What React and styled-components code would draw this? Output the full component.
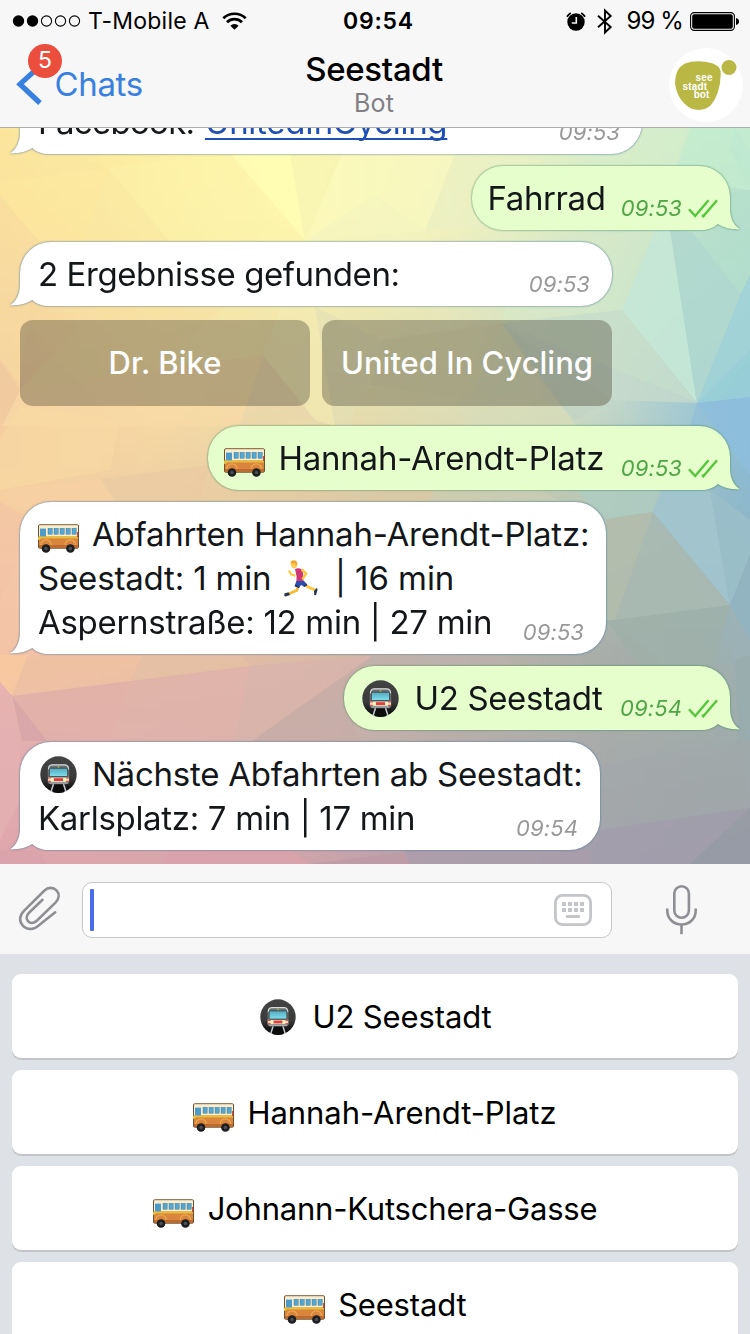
import React from "react";
import styled, { createGlobalStyle } from "styled-components";

const Global = createGlobalStyle`
  * { box-sizing: border-box; }
  body { margin: 0; font-family: Inter, "Liberation Sans", sans-serif; font-feature-settings: "calt" 0; }
`;

const Screen = styled.div`
  width: 750px;
  height: 1334px;
  overflow: hidden;
  display: flex;
  flex-direction: column;
  background: #f7f7f7;
`;

const Header = styled.header`
  height: 128px;
  flex: none;
  background: #f7f7f7;
  border-bottom: 1px solid #adada9;
`;

const StatusBar = styled.div`
  height: 40px;
  padding: 0 11px 0 12px;
  display: grid;
  grid-template-columns: 331px auto 1fr;
  align-items: center;
  line-height: 42px;
  color: #000;
`;

const StatusGroup = styled.div`
  display: flex;
  align-items: center;
  height: 40px;
  justify-content: ${(p) => (p.$end ? "flex-end" : "flex-start")};
`;

const Carrier = styled.span`
  font-size: 23px;
  letter-spacing: 0.24px;
  margin: 0 12px 0 7px;
`;

const Clock = styled.span`
  font-size: 23px;
  font-weight: 600;
  letter-spacing: 0.75px;
`;

const Percent = styled.span`
  font-size: 24px;
  letter-spacing: -0.9px;
  margin: 0 7px 0 14px;
`;

const NavBar = styled.div`
  height: 87px;
  display: grid;
  grid-template-columns: 249px 1fr 251px;
`;

const Back = styled.div`
  position: relative;
  display: flex;
  align-items: flex-start;
  padding: 24px 0 0 16px;
  color: #3880e0;
`;

const BackLabel = styled.span`
  font-size: 33px;
  line-height: 40px;
  letter-spacing: -0.35px;
  margin-left: 11.5px;
`;

const Badge = styled.span`
  position: absolute;
  left: 28px;
  top: 4px;
  width: 34px;
  height: 34px;
  border-radius: 17px;
  background: #eb4e3d;
  color: #fff;
  font-size: 23px;
  line-height: 33px;
  text-align: center;
`;

const Heading = styled.div`
  padding-top: 9px;
  text-align: center;
`;

const Title = styled.div`
  font-size: 33px;
  font-weight: 500;
  line-height: 40px;
  letter-spacing: -0.3px;
  color: #000;
`;

const Subtitle = styled.div`
  font-size: 25px;
  line-height: 28px;
  letter-spacing: 0.2px;
  color: #808084;
`;

const AvatarSlot = styled.div`
  display: flex;
  justify-content: flex-end;
  padding: 8px 7px 0 0;
`;

const Chat = styled.main`
  position: relative;
  height: 736px;
  flex: none;
  overflow: hidden;
  display: flex;
  flex-direction: column;
  justify-content: flex-end;
  gap: 12px;
  padding: 0 20px 14px;
`;

const WallpaperSvg = styled.svg`
  position: absolute;
  inset: 0;
`;

const Bubble = styled.div`
  position: relative;
  flex: none;
  width: ${(p) => p.$w}px;
  align-self: ${(p) => (p.$out ? "flex-end" : "flex-start")};
  padding: 10px ${(p) => (p.$out ? 12 : 22)}px 10px ${(p) => p.$pad ?? 18}px;
  border-radius: 31px;
  background: ${(p) => (p.$out ? "#e5fecb" : "#fff")};
  filter: drop-shadow(0 0 0.9px ${(p) => (p.$out ? "rgba(60,130,90,.95)" : "rgba(60,110,150,.95)")});
`;

const Tail = styled.svg`
  position: absolute;
  bottom: 0;
  ${(p) => (p.$out ? "right: -10px; transform: scaleX(-1);" : "left: -10px;")}
`;

const Line = styled.div`
  position: relative;
  display: flex;
  align-items: flex-start;
  height: 44px;
  font-size: 33px;
  line-height: 44px;
  color: #14171a;
  white-space: pre;
`;

const Words = styled.span`
  letter-spacing: ${(p) => p.$ls ?? -0.28}px;
  margin-left: ${(p) => p.$ml ?? 0}px;
`;

const Link = styled.a`
  color: #1d4fb4;
  letter-spacing: -0.3px;
  margin-left: 10.5px;
  text-decoration: underline;
  text-decoration-thickness: 2px;
  text-underline-offset: 4px;
  text-decoration-skip-ink: none;
`;

const Meta = styled.span`
  display: flex;
  align-items: flex-start;
  gap: 6px;
  margin: 10px 0 0 auto;
  font-size: 22px;
  font-style: italic;
  letter-spacing: 0.1px;
  color: ${(p) => (p.$out ? "#51a548" : "#999")};
`;

const Choices = styled.div`
  position: relative;
  flex: none;
  display: flex;
  gap: 12px;
  margin: 2px 0 8px;
`;

const Choice = styled.button`
  width: 290px;
  height: 86px;
  padding: 0;
  border: 0;
  border-radius: 13px;
  background: rgba(73, 67, 52, 0.37);
  color: #fff;
  font: 500 31px/86px Inter, "Liberation Sans", sans-serif;
  letter-spacing: 0;
`;

const Glyph = styled.svg`
  flex: none;
  display: block;
  margin-top: ${(p) => p.$top ?? 0}px;
  margin-left: ${(p) => p.$left ?? 0}px;
`;

const Composer = styled.div`
  height: 90px;
  flex: none;
  display: flex;
  align-items: flex-start;
  padding: 18px 0 0 17px;
  background: #f7f7f7;
`;

const Field = styled.div`
  width: 530px;
  height: 56px;
  margin: 0 52px 0 20px;
  display: flex;
  align-items: center;
  justify-content: space-between;
  padding: 0 19px 0 7px;
  border: 1px solid #c6c7ca;
  border-radius: 10px;
  background: #fff;
`;

const Caret = styled.span`
  width: 4px;
  height: 42px;
  border-radius: 1px;
  background: #496cea;
`;

const Keyboard = styled.div`
  flex: 1 0 380px;
  display: flex;
  flex-direction: column;
  gap: 12px;
  padding: 20px 12px 0;
  background: #dee2e7;
`;

const Key = styled.button`
  flex: none;
  height: 84px;
  padding: 0;
  border: 0;
  border-radius: 9px;
  background: #fff;
  box-shadow: 0 2px 0 #c3c5c8;
  display: flex;
  justify-content: center;
  align-items: flex-start;
  font: 400 31px/86px Inter, "Liberation Sans", sans-serif;
  color: #000;
`;

/* Colour samples of the wallpaper, one row per height. */
const SAMPLE_X = [0, 150, 300, 450, 600, 750];
const SAMPLE_Y = [128, 215, 300, 400, 495, 580, 660, 740, 864];
const SAMPLES = [
  ["fbe49c", "fdf0a2", "fffbb0", "f4f4be", "d8efca", "bfe8d0"],
  ["fbe09c", "fbeba2", "fff9b0", "f1f2c0", "d6e8c8", "b4dfcc"],
  ["f7d69e", "f9e4a4", "f3ebb0", "e6e8bc", "cbe4cc", "9fd2d2"],
  ["f4cca0", "f8dba4", "ecdfac", "dfe0b6", "c8dac8", "88bedb"],
  ["f6cfa0", "efcfa2", "e2cba4", "d2c8a8", "b6c8b8", "8cb8ce"],
  ["f4c6a8", "eec4a4", "dcc0a4", "c4beac", "aebbb0", "94b3be"],
  ["f5c3a6", "edbfa4", "dcbaa6", "bdb3aa", "a8aca8", "9bb0b2"],
  ["e4aeb0", "deb2ac", "ceb0aa", "b8aeaa", "a9acaa", "9aacac"],
  ["dfa6ac", "d9a5ac", "cfa3aa", "b2a0ac", "a29eab", "9598a2"],
];

const hex = (s) => [0, 2, 4].map((i) => parseInt(s.slice(i, i + 2), 16));

function colourAt(x, y) {
  const span = (list, v) => {
    let i = 0;
    while (i < list.length - 2 && v > list[i + 1]) i += 1;
    return [i, Math.min(1, Math.max(0, (v - list[i]) / (list[i + 1] - list[i])))];
  };
  const [i, u] = span(SAMPLE_X, x);
  const [j, v] = span(SAMPLE_Y, y);
  const c = [SAMPLES[j][i], SAMPLES[j][i + 1], SAMPLES[j + 1][i], SAMPLES[j + 1][i + 1]].map(hex);
  const mix = [0, 1, 2].map((k) =>
    Math.round((c[0][k] * (1 - u) + c[1][k] * u) * (1 - v) + (c[2][k] * (1 - u) + c[3][k] * u) * v)
  );
  return `rgb(${mix.join(",")})`;
}

/* Low-poly facets over the colour field. */
const FACETS = [
  ["0,128 108,168 0,182", "#fbe7a0", 0.45],
  ["80,155 205,152 240,128 0,128", "#fcefa4", 0.3],
  ["108,168 0,182 0,195 38,240 82,242", "#feea9e", 0.55],
  ["108,168 170,242 82,242", "#faeca4", 0.4],
  ["0,195 38,242 20,385 0,358", "#f8dca2", 0.5],
  ["108,168 230,153 305,241 170,242", "#fdf5aa", 0.45],
  ["230,153 290,153 305,240", "#fffeb6", 0.7],
  ["290,153 342,154 305,241", "#f7f3b4", 0.7],
  ["342,154 455,154 425,231 305,241", "#faf9c2", 0.5],
  ["305,241 375,195 425,231 430,242", "#f3f4c2", 0.5],
  ["455,154 540,160 480,225 425,231", "#eaf0c4", 0.6],
  ["600,128 690,128 672,180 600,165", "#daefca", 0.6],
  ["690,128 750,128 750,190 672,180", "#c5ecce", 0.7],
  ["735,128 750,150 750,190 730,150", "#bde8d0", 0.6],
  ["730,192 750,190 750,275 741,294 690,240 735,236", "#b5dfcc", 0.8],
  ["520,242 655,230 622,310 502,323", "#d7e9c8", 0.6],
  ["655,230 670,230 697,403 622,310", "#c6e8d6", 0.9],
  ["670,230 692,232 741,294 697,403", "#b1d8ce", 0.9],
  ["741,294 750,275 750,360 697,403", "#a2d3d6", 0.9],
  ["697,403 750,350 750,398", "#98ced6", 0.9],
  ["697,403 750,397 750,475", "#8dbedb", 0.9],
  ["697,403 750,475 712,426 690,426", "#93bfd6", 0.9],
  ["502,323 622,310 697,403", "#c9dfca", 0.8],
  ["502,323 697,403 612,400", "#c7dacc", 0.8],
  ["502,323 612,400 576,420 545,390", "#c3d3c4", 0.8],
  ["382,340 502,323 470,400 370,385", "#dddcb0", 0.6],
  ["502,323 460,426 576,426", "#d9ddb8", 0.7],
  ["100,307 225,307 140,372 20,390", "#f6e0a2", 0.5],
  ["225,307 280,307 263,355 150,370", "#f6e6aa", 0.5],
  ["20,390 263,355 240,426 0,426", "#f8daa6", 0.6],
  ["263,355 315,420 240,426", "#ead6ac", 0.6],
  ["263,355 280,307 315,307 335,426 315,420", "#f2eab2", 0.7],
  ["315,307 382,340 350,426 335,426", "#e3e0b6", 0.6],
  ["0,360 20,390 0,430", "#f0c9a0", 0.8],
  ["0,440 20,406 120,420 110,470 0,490", "#f9dba4", 0.6],
  ["100,479 210,465 200,501 115,501", "#ebcba2", 0.85],
  ["0,490 100,479 115,501 22,510", "#f6d0a2", 0.7],
  ["0,502 22,515 20,560 0,600", "#f3c2a6", 0.5],
  ["375,490 433,490 430,501 365,501", "#dbc9a4", 0.7],
  ["433,490 540,490 560,501 430,501", "#ccceb4", 0.6],
  ["576,490 662,490 653,512 606,519", "#afcbc0", 0.9],
  ["606,519 653,512 615,620 606,620", "#b3bcad", 0.9],
  ["653,512 730,605 615,621", "#a9b9b1", 0.9],
  ["662,488 710,490 730,605 653,512", "#a1c4cd", 0.95],
  ["710,490 750,520 750,555 730,605", "#9abfc9", 0.9],
  ["730,605 750,555 750,640", "#91b4c1", 0.9],
  ["606,621 730,605 715,665 640,665", "#9fb0a9", 0.8],
  ["730,605 750,640 750,740 735,690", "#9cb2b5", 0.8],
  ["0,655 28,655 12,696 0,682", "#f9cb9f", 0.8],
  ["28,655 142,655 130,681 12,696", "#efc1a2", 0.85],
  ["142,655 240,655 250,666 130,681", "#e4c0a4", 0.9],
  ["12,696 130,681 110,741 47,741", "#e1b0a9", 0.85],
  ["130,681 250,666 235,741 110,741", "#dfb3aa", 0.85],
  ["12,696 47,741 22,741", "#d6a4a8", 0.8],
  ["0,682 12,696 20,742 20,800 0,840", "#e5b0b2", 0.8],
  ["250,666 372,656 252,741 235,741", "#d8b4ac", 0.85],
  ["372,656 344,700 360,741 252,741", "#c7aca8", 0.8],
  ["372,656 500,656 515,665 365,665", "#bcb0ac", 0.7],
  ["606,665 735,665 740,740 600,765", "#a4ada9", 0.4],
  ["735,660 750,655 750,800 738,740", "#98aaac", 0.6],
  ["600,765 750,740 750,808 600,830", "#a2a8a9", 0.7],
  ["600,830 750,808 690,864 590,864", "#a29eac", 0.8],
  ["750,808 750,864 690,864", "#979ba5", 0.9],
  ["0,850 40,850 45,864 0,864", "#d8a2aa", 0.6],
  ["170,850 290,850 310,864 160,864", "#dba2ab", 0.7],
  ["310,864 404,852 410,864", "#bd9ba6", 0.8],
  ["404,850 590,850 590,864 410,864", "#aa9cab", 0.7],
];

function Wallpaper() {
  const cells = [];
  for (let y = 88; y < 904; y += 20) {
    for (let x = -40; x < 800; x += 20) cells.push([x, y]);
  }
  return (
    <WallpaperSvg width="750" height="736" viewBox="0 128 750 736">
      <defs>
        <filter id="soft" x="0" y="0" width="1" height="1" colorInterpolationFilters="sRGB">
          <feGaussianBlur stdDeviation="10" />
        </filter>
      </defs>
      <g filter="url(#soft)">
        {cells.map(([x, y]) => (
          <rect key={`${x}-${y}`} x={x} y={y} width="21" height="21" fill={colourAt(x + 10, y + 10)} />
        ))}
      </g>
      {FACETS.map(([points, fill, opacity]) => (
        <polygon key={points} points={points} fill={fill} opacity={opacity} />
      ))}
    </WallpaperSvg>
  );
}

function Bus({ top = 12, left = 0, width = 41 }) {
  return (
    <Glyph $top={top} $left={left} width={width} height="29" viewBox="0 0 41 29" preserveAspectRatio="none">
      <rect x="0.5" y="0.8" width="40" height="23.4" rx="1.2" fill="#d9853d" stroke="#6f5132" />
      <path d="M1 2q0-.8.8-.8h37.400q.8 0 .8.8v10.500H1z" fill="#f6efd3" />
      <path d="M1 12.200h39v2.400H1z" fill="#e9bb3c" />
      <path d="M1 21h39v2.800H1z" fill="#bd6c2f" />
      <rect x="2" y="4.600" width="6" height="7.800" fill="#4c9bc8" />
      {[10, 16, 22, 28, 34].map((x) => (
        <rect key={x} x={x} y="4.300" width="4.200" height="6" fill="#55a5cf" stroke="#39708f" strokeWidth="0.4" />
      ))}
      <rect x="39.200" y="8" width="1.600" height="5" fill="#a93428" />
      <rect x="0" y="12.500" width="2.400" height="3.600" rx="1" fill="#e7c640" />
      <path d="M2.800 21a5.200 5.200 0 0 1 10.400 0M27.200 21a5.200 5.200 0 0 1 10.400 0" fill="none" stroke="#eba850" strokeWidth="1.300" />
      {[8, 32.4].map((x) => (
        <g key={x}>
          <circle cx={x} cy="24.500" r="4.300" fill="#1d1e20" />
          <circle cx={x} cy="24.500" r="1.700" fill="#4b5158" />
        </g>
      ))}
    </Glyph>
  );
}

function Metro({ top = 4, left = 0, size = 37 }) {
  return (
    <Glyph $top={top} $left={left} width={size} height={size} viewBox="0 0 37 37">
      <defs>
        <linearGradient id="tunnel" x1="0" y1="0" x2="0" y2="1">
          <stop offset="0" stopColor="#434343" />
          <stop offset="0.600" stopColor="#3a3a3a" />
          <stop offset="1" stopColor="#000" />
        </linearGradient>
        <linearGradient id="windshield" x1="0" y1="0" x2="0" y2="1">
          <stop offset="0" stopColor="#55aabd" />
          <stop offset="1" stopColor="#7ee0ee" />
        </linearGradient>
      </defs>
      <circle cx="18.500" cy="18.500" r="18.200" fill="url(#tunnel)" />
      <path d="M13.500 28 11 35.800M23.500 28l2.500 7.800" stroke="#c8ccd2" strokeWidth="1.500" />
      <path d="M14.500 28h8l1.600 8.300q-5.600 1.200-11.200 0z" fill="#0c0c0c" />
      <path d="M11 8.500h15q3 .5 3.200 4L29.300 26q-.5 2.300-2.800 2.300h-16q-2.300 0-2.800-2.300l.1-13.500q.2-3.500 3.200-4z" fill="#6b7073" />
      <path d="M8.500 13.500q0-4.500 3.500-4.700h13q3.500.2 3.500 4.700" fill="none" stroke="#d8dadb" strokeWidth="1.200" />
      <rect x="9.400" y="12.200" width="18.200" height="8.400" rx="0.800" fill="url(#windshield)" stroke="#343a3c" strokeWidth="0.800" />
      <rect x="8" y="21.500" width="21" height="4.400" fill="#e8dcc8" />
      <rect x="14" y="22.200" width="9" height="2.800" fill="#e43c38" />
      <path d="M8 21.900h3M26 21.900h3M8 25.300h3M26 25.300h3" stroke="#e4524c" strokeWidth="1.200" />
      <circle cx="12" cy="23.700" r="1.700" fill="#fff5a8" />
      <circle cx="25" cy="23.700" r="1.700" fill="#fff5a8" />
      <path d="M9.500 27h18" stroke="#b5b8bb" strokeWidth="1.200" />
      <rect x="17.800" y="10" width="1.500" height="1.500" fill="#b6bd35" />
    </Glyph>
  );
}

function Runner() {
  return (
    <Glyph $top={4} $left={13} width="34" height="37" viewBox="0 0 34 37">
      <path d="M10.500 15.500 7 14.200 5.400 11.300" fill="none" stroke="#ffc83a" strokeWidth="2.200" strokeLinecap="round" strokeLinejoin="round" />
      <path d="M14.500 25 13 30.300 5 33.800" fill="none" stroke="#f7b930" strokeWidth="2.600" strokeLinejoin="round" />
      <path d="M20 24 23.500 26.600 31 30" fill="none" stroke="#ffc83a" strokeWidth="2.800" strokeLinejoin="round" />
      <path d="M12.500 20.800h7.300l3.500 3.600-3 2.400-3.300-1.800-2 2.900-4.400-1.800z" fill="#2e4cab" />
      <path d="M11 25.700l4 1.800M20 26.500l3-2" stroke="#1b2a6c" strokeWidth="1.300" />
      <path d="M11 9q3.500-1.500 6.500.2l1.600 4.100.3 7.700h-7l.2-4.500z" fill="#cf3673" />
      <path d="M18.300 10 22.200 13.600 18.800 18.600" fill="none" stroke="#ffc83a" strokeWidth="2.400" strokeLinecap="round" strokeLinejoin="round" />
      <path d="M6.800 3.500q0-2.500 3-2.500 3.300 0 3.300 3.300 0 3.700-2.600 4.300-3-.2-3.700-3z" fill="#ffcb50" />
      <path d="M6.400 2.800Q6.700.3 9.700.3q4 .2 3.600 4.300L12 6l-.7-2.600Q8.800 3.800 6.400 2.800z" fill="#efa92a" />
      <path d="M.3 33.600 4.500 32.200l1.600 2.900-4.600 1.500q-1.500-.2-1.200-3z" fill="#2a3350" />
      <path d="M30 31l2-2.600q1.700-.3 1.500 1.300L32 35.300l-1.800-.2z" fill="#2a3350" />
    </Glyph>
  );
}

const Checks = () => (
  <Glyph $top={13} width="30" height="20" viewBox="0 0 30 20">
    <path d="M1 10.200 7.200 17 20.500 1.300M14 16l1.300 1.200L29 1.300" fill="none" stroke="#56c63c" strokeWidth="2.400" />
  </Glyph>
);

function BubbleTail({ out }) {
  return (
    <Tail $out={out} width="40" height="34" viewBox="0 0 40 34">
      <path d="M10 0v12C10 21 7 29 0 33.200 9 33.600 16 32 22.300 28 27 32 32 34 40 34V0z" fill={out ? "#e5fecb" : "#fff"} />
    </Tail>
  );
}

const Incoming = ({ w, children }) => (
  <Bubble $w={w}>
    <BubbleTail />
    {children}
  </Bubble>
);

const Outgoing = ({ w, pad, time, children }) => (
  <Bubble $w={w} $pad={pad} $out>
    <BubbleTail out />
    <Line>
      {children}
      <Meta $out>
        {time}
        <Checks />
      </Meta>
    </Line>
  </Bubble>
);

const SignalDots = () => (
  <Glyph width="69" height="14" viewBox="0 0 69 14">
    {[0, 1, 2, 3, 4].map((i) => (
      <circle key={i} cx={6.5 + i * 14} cy="7" r={i < 2 ? 5.7 : 5.1} fill={i < 2 ? "#000" : "none"} stroke={i < 2 ? "none" : "#000"} strokeWidth="1.100" />
    ))}
  </Glyph>
);

const Wifi = () => (
  <Glyph width="25" height="18" viewBox="0 0 25 18">
    <path d="M1.300 6.300a16 16 0 0 1 22.400 0M5 10.200a10.700 10.700 0 0 1 15 0" fill="none" stroke="#000" strokeWidth="2.700" />
    <path d="M12.500 17.800 8.400 13.700a5.800 5.800 0 0 1 8.200 0z" />
  </Glyph>
);

const Alarm = () => (
  <Glyph width="20" height="19" viewBox="0 0 20 19">
    <circle cx="10" cy="10" r="8.700" />
    <path d="M1 4.700A11 11 0 0 1 4.800 1M15.200 1A11 11 0 0 1 19 4.700" fill="none" stroke="#000" strokeWidth="1.800" />
    <path d="M10.300 5v6H5.800" fill="none" stroke="#f7f7f7" strokeWidth="1.600" />
  </Glyph>
);

const Bluetooth = () => (
  <Glyph $left={11} width="16" height="27" viewBox="0 0 16 27">
    <path d="M1 7.700 13.700 19 8 24.500V2.500L13.700 8 1 19.300" fill="none" stroke="#000" strokeWidth="1.900" />
  </Glyph>
);

const Battery = () => (
  <Glyph width="49" height="19" viewBox="0 0 49 19">
    <rect x="0.600" y="0.600" width="43.800" height="17.800" rx="3.600" fill="none" stroke="#000" strokeWidth="1.100" />
    <rect x="2.200" y="2.200" width="40.600" height="14.600" rx="2" />
    <path d="M46 6q3 .8 3 3.500T46 13z" />
  </Glyph>
);

const Chevron = () => (
  <Glyph width="27" height="42" viewBox="0 0 27 42">
    <path d="M24 2 4 20.200 24 39" fill="none" stroke="#3880e0" strokeWidth="5.200" />
  </Glyph>
);

const Avatar = () => (
  <svg width="74" height="74" viewBox="669 48 74 74" fontFamily="'Liberation Sans', sans-serif" fontWeight="700" fontSize="10">
    <circle cx="706" cy="85" r="37" fill="#fff" />
    <path d="M685 63.500Q697 59 713 63.500q8.500 3.500 7.800 11Q720 94 711 105q-8 7.500-20 3.500-14-8-16-25.500 0-14.500 10-19.500z" fill="#bab845" />
    <circle cx="729" cy="67.500" r="7.500" fill="#bab845" />
    <g fill="#fff">
      <text x="695.500" y="80.500" textLength="17">see</text>
      <text x="682.500" y="89.500" textLength="24.500">stadt</text>
      <text x="693.700" y="98.300" textLength="15.600">bot</text>
    </g>
  </svg>
);

const Paperclip = () => (
  <Glyph $top={2} width="45" height="50" viewBox="17 884 45 50">
    <path
      d="M42.500 899.800 29 912.800c-3 3-2.800 6.500-.8 8.600s5.600 2.300 8.600-.6l18.700-18.200c4-4.200 4-9 1-12.200s-8.300-3.600-12.300.3L24.200 910.600c-5.500 5.500-4.900 11.400-1.200 15.200s10.300 4.600 15.600-.2L55.200 912.300"
      fill="none"
      stroke="#8e8f94"
      strokeWidth="2.600"
      strokeLinecap="round"
      strokeLinejoin="round"
    />
  </Glyph>
);

const KeyboardIcon = () => (
  <Glyph width="38" height="32" viewBox="0 0 38 32">
    <rect x="1.400" y="1.400" width="35.200" height="29.200" rx="7" fill="none" stroke="#c4c5c8" strokeWidth="2.800" />
    {[8, 14, 20, 26].map((x) => (
      <path key={x} d={`M${x} 8h4v4h-4zM${x} 14h4v4h-4z`} fill="#c4c5c8" />
    ))}
    <rect x="12" y="21" width="14" height="3" rx="1" fill="#c4c5c8" />
  </Glyph>
);

const Microphone = () => (
  <Glyph $top={2} width="34" height="52" viewBox="664 884 34 52">
    <rect x="674.300" y="886.200" width="14.600" height="31.500" rx="7.300" fill="none" stroke="#8e8f94" strokeWidth="2.600" />
    <path d="M667.300 908.500v2c0 8 6 14 14.200 14s14.200-6 14.200-14v-2M681.500 924.500v9.700" fill="none" stroke="#8e8f94" strokeWidth="2.600" />
  </Glyph>
);

export default function App() {
  return (
    <Screen>
      <Global />
      <Header>
        <StatusBar>
          <StatusGroup>
            <SignalDots />
            <Carrier>T-Mobile A</Carrier>
            <Wifi />
          </StatusGroup>
          <Clock>09:54</Clock>
          <StatusGroup $end>
            <Alarm />
            <Bluetooth />
            <Percent>99 %</Percent>
            <Battery />
          </StatusGroup>
        </StatusBar>
        <NavBar>
          <Back>
            <Chevron />
            <BackLabel>Chats</BackLabel>
            <Badge>5</Badge>
          </Back>
          <Heading>
            <Title>Seestadt</Title>
            <Subtitle>Bot</Subtitle>
          </Heading>
          <AvatarSlot>
            <Avatar />
          </AvatarSlot>
        </NavBar>
      </Header>

      <Chat>
        <Wallpaper />
        <Incoming w={622}>
          <Line>
            <Words $ls={-0.7}>Facebook:</Words>
            <Link>UnitedInCycling</Link>
            <Meta>09:53</Meta>
          </Line>
        </Incoming>
        <Outgoing w={258} pad={15.5} time="09:53">
          <Words $ls={-0.4}>Fahrrad</Words>
        </Outgoing>
        <Incoming w={592}>
          <Line>
            <Words $ls={-0.42}>2 Ergebnisse gefunden:</Words>
            <Meta>09:53</Meta>
          </Line>
        </Incoming>
        <Choices>
          <Choice>Dr. Bike</Choice>
          <Choice>United In Cycling</Choice>
        </Choices>
        <Outgoing w={522} pad={16} time="09:53">
          <Bus />
          <Words $ls={-0.24} $ml={13.5}>Hannah-Arendt-Platz</Words>
        </Outgoing>
        <Incoming w={586}>
          <Line>
            <Bus />
            <Words $ls={-0.22} $ml={13}>Abfahrten Hannah-Arendt-Platz:</Words>
          </Line>
          <Line>
            <Words $ls={-0.17}>Seestadt: 1 min</Words>
            <Runner />
            <Words $ls={-0.05} $ml={16.5}>| 16 min</Words>
          </Line>
          <Line>
            <Words $ls={-0.3}>Aspernstraße: 12 min | 27 min</Words>
            <Meta>09:53</Meta>
          </Line>
        </Incoming>
        <Outgoing w={386} pad={17.5} time="09:54">
          <Metro />
          <Words $ls={-0.36} $ml={16}>U2 Seestadt</Words>
        </Outgoing>
        <Incoming w={580}>
          <Line>
            <Metro left={2} />
            <Words $ls={-0.25} $ml={15}>Nächste Abfahrten ab Seestadt:</Words>
          </Line>
          <Line>
            <Words $ls={-0.31}>Karlsplatz: 7 min | 17 min</Words>
            <Meta>09:54</Meta>
          </Line>
        </Incoming>
      </Chat>

      <Composer>
        <Paperclip />
        <Field>
          <Caret />
          <KeyboardIcon />
        </Field>
        <Microphone />
      </Composer>

      <Keyboard>
        <Key>
          <Metro top={25} left={2} size={36} />
          <Words $ls={-0.12} $ml={16}>U2 Seestadt</Words>
        </Key>
        <Key>
          <Bus top={33} width={41} />
          <Words $ls={-0.06} $ml={13}>Hannah-Arendt-Platz</Words>
        </Key>
        <Key>
          <Bus top={33} width={41} />
          <Words $ls={-0.2} $ml={14}>Johnann-Kutschera-Gasse</Words>
        </Key>
        <Key>
          <Bus top={33} width={41} />
          <Words $ls={-0.18} $ml={13.5}>Seestadt</Words>
        </Key>
      </Keyboard>
    </Screen>
  );
}
